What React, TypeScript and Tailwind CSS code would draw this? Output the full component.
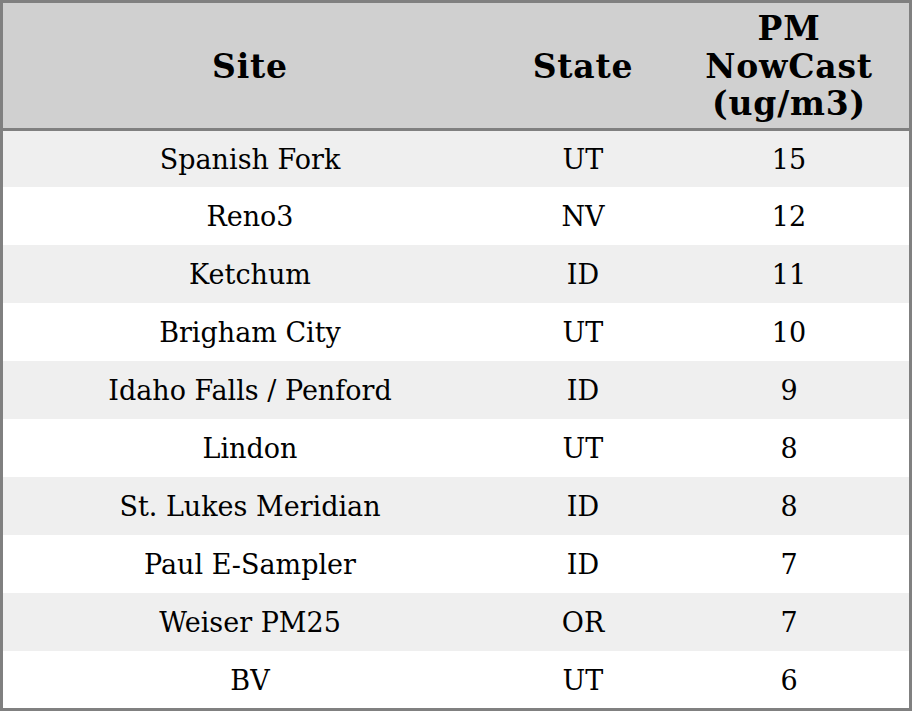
const rows = [
  ['Spanish Fork', 'UT', '15'],
  ['Reno3', 'NV', '12'],
  ['Ketchum', 'ID', '11'],
  ['Brigham City', 'UT', '10'],
  ['Idaho Falls / Penford', 'ID', '9'],
  ['Lindon', 'UT', '8'],
  ['St. Lukes Meridian', 'ID', '8'],
  ['Paul E-Sampler', 'ID', '7'],
  ['Weiser PM25', 'OR', '7'],
  ['BV', 'UT', '6'],
];

export default function App() {
  return (
    <div className="w-[912px] h-[711px] bg-white font-['DejaVu_Serif',serif] text-black">
      <div className="w-full h-full border-[3px] border-[#808080] flex flex-col">
        <div className="grid grid-cols-[494px_172px_1fr] h-[128px] shrink-0 bg-[#d0d0d0] border-b-[3px] border-[#808080] text-[33px] tracking-[0.8px] font-bold leading-[37.5px] text-center items-center pt-[2px]">
          <div>Site</div>
          <div>State</div>
          <div>PM<br />NowCast<br />(ug/m3)</div>
        </div>
        {rows.map((r, i) => (
          <div
            key={i}
            className={`grid grid-cols-[494px_172px_1fr] items-center text-center text-[27px] pt-[3px] ${i === 0 ? 'h-[56px] shrink-0' : i === rows.length - 1 ? 'flex-1' : 'h-[58px] shrink-0'} ${i % 2 === 0 ? 'bg-[#efefef]' : 'bg-white'}`}
          >
            <div>{r[0]}</div>
            <div>{r[1]}</div>
            <div>{r[2]}</div>
          </div>
        ))}
      </div>
    </div>
  );
}
